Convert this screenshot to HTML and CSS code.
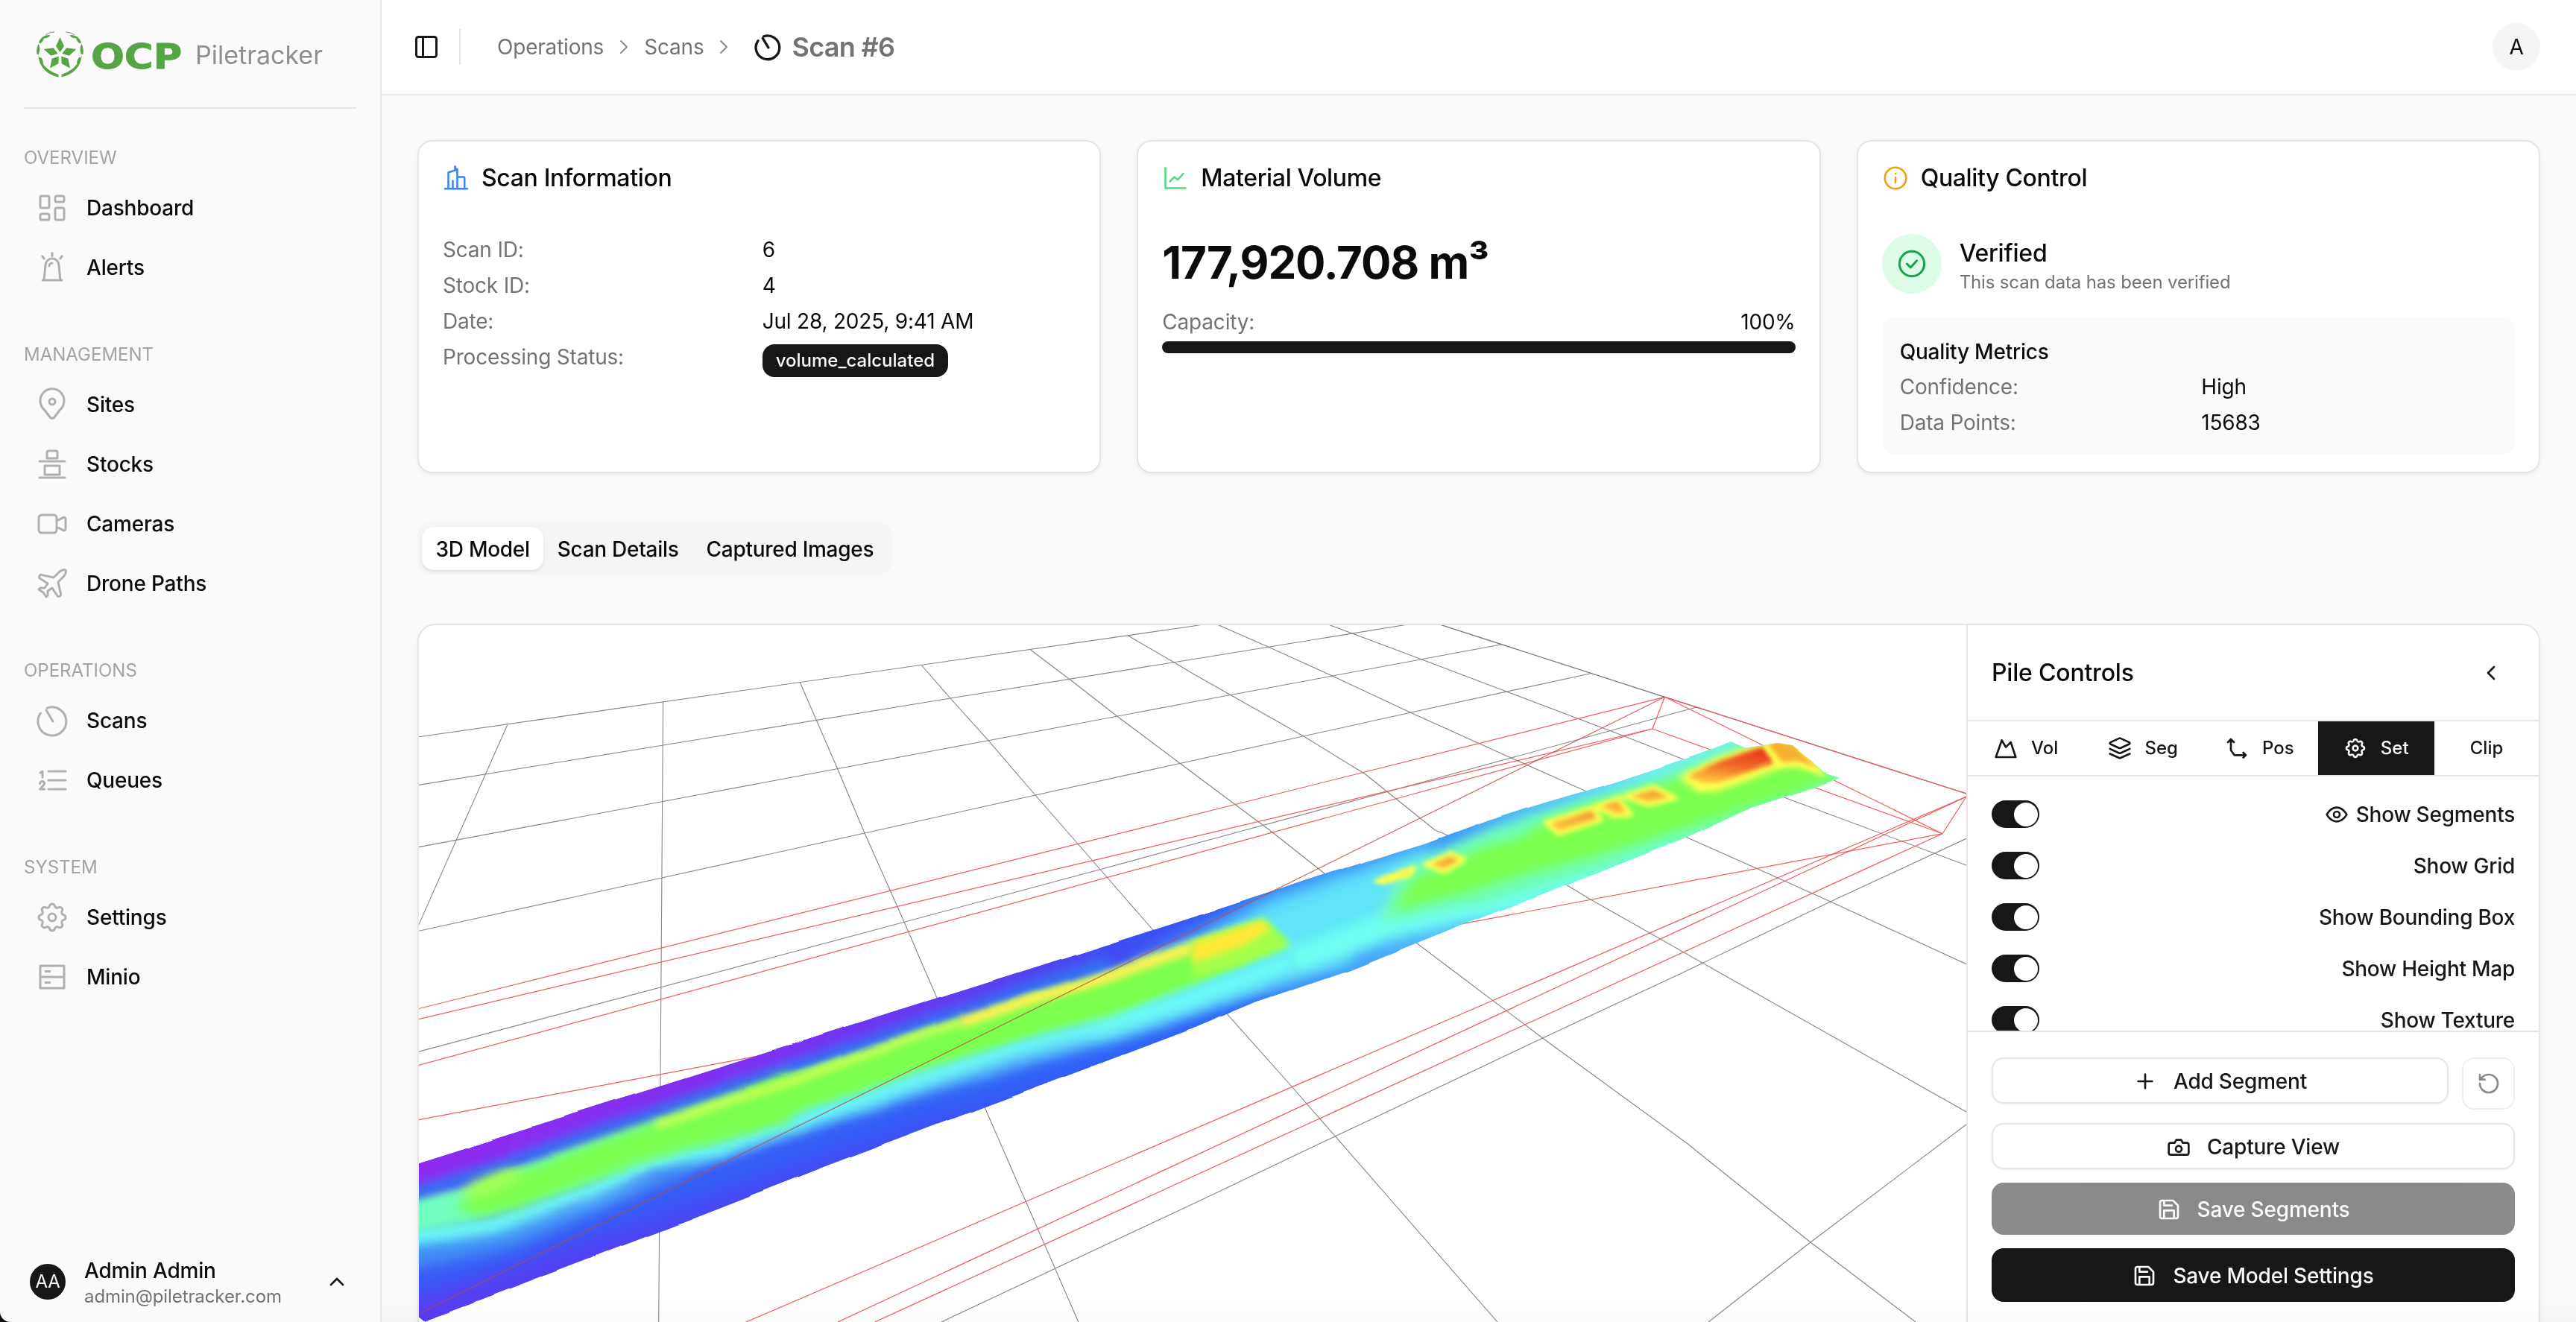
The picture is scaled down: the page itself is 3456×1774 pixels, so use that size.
FILE: index.html
```html
<!DOCTYPE html>
<html lang="en">
<head>
<meta charset="utf-8">
<title>Scan #6 - OCP Piletracker</title>
<link rel="stylesheet" href="styles.css">
</head>
<body>
<svg class="defs" aria-hidden="true">
  <symbol id="i-dashboard" viewBox="0 0 24 24"><path d="M5 4h4a1 1 0 0 1 1 1v6a1 1 0 0 1-1 1H5a1 1 0 0 1-1-1V5a1 1 0 0 1 1-1M5 16h4a1 1 0 0 1 1 1v2a1 1 0 0 1-1 1H5a1 1 0 0 1-1-1v-2a1 1 0 0 1 1-1M15 12h4a1 1 0 0 1 1 1v6a1 1 0 0 1-1 1h-4a1 1 0 0 1-1-1v-6a1 1 0 0 1 1-1M15 4h4a1 1 0 0 1 1 1v2a1 1 0 0 1-1 1h-4a1 1 0 0 1-1-1V5a1 1 0 0 1 1-1"/></symbol>
  <symbol id="i-alert" viewBox="0 0 24 24"><path d="M5.500 20.500h13M6.500 20.500 7.500 10.500a4.500 4.500 0 0 1 9 0L17.500 20.500M10 11a2 2 0 0 1 2-2M12 2.200v2M5.400 4.400l1.200 1.600M18.600 4.400l-1.200 1.600"/></symbol>
  <symbol id="i-pin" viewBox="0 0 24 24"><path d="M10 10.500a2 2 0 1 0 4 0a2 2 0 0 0-4 0M17.200 16l-3.800 5a1.800 1.800 0 0 1-2.800 0L6.800 16a8 8 0 1 1 10.400 0z" transform="translate(0 -.5)"/></symbol>
  <symbol id="i-stock" viewBox="0 0 24 24"><path d="M9.500 3h5a1 1 0 0 1 1 1v4h-7V4a1 1 0 0 1 1-1zM3.500 10h17M7 13h10v6H7zM3.500 21h17"/></symbol>
  <symbol id="i-video" viewBox="0 0 24 24"><path d="M15 10l4.553-2.276A1 1 0 0 1 21 8.618v6.764a1 1 0 0 1-1.447.894L15 14v-4zM3 8a2 2 0 0 1 2-2h8a2 2 0 0 1 2 2v8a2 2 0 0 1-2 2H5a2 2 0 0 1-2-2z"/></symbol>
  <symbol id="i-plane" viewBox="0 0 24 24"><path d="M17.800 19.200 16 11l3.500-3.500C21 6 21.500 4 21 3c-1-.5-3 0-4.500 1.500L13 8 4.800 6.200c-.5-.1-.9.1-1.100.5l-.3.5c-.2.5-.1 1 .3 1.300L9 12l-2 3H4l-1 1 3 2 2 3 1-1v-3l3-2 3.500 5.300c.3.4.8.5 1.300.3l.5-.2c.4-.3.6-.7.5-1.200z"/></symbol>
  <symbol id="i-scan" viewBox="0 0 24 24"><path d="M12.500 12.500 8 5M8.600 3.600A9.500 9.500 0 1 1 4.200 7"/></symbol>
  <symbol id="i-queue" viewBox="0 0 24 24"><path d="M9.500 6h11.500M9.500 12h11.500M9.500 18h11.500M5.500 10V6L4 7M3.800 14.200a1.500 1.500 0 0 1 3 0c0 .6-.5 1-1 1.500L3.800 18h3"/></symbol>
  <symbol id="i-gear" viewBox="0 0 24 24"><path d="M10.325 4.317c.426-1.756 2.924-1.756 3.350 0a1.724 1.724 0 0 0 2.573 1.066c1.543-.94 3.310.826 2.370 2.370a1.724 1.724 0 0 0 1.065 2.572c1.756.426 1.756 2.924 0 3.350a1.724 1.724 0 0 0-1.066 2.573c.94 1.543-.826 3.310-2.370 2.370a1.724 1.724 0 0 0-2.572 1.065c-.426 1.756-2.924 1.756-3.350 0a1.724 1.724 0 0 0-2.573-1.066c-1.543.94-3.310-.826-2.370-2.370a1.724 1.724 0 0 0-1.065-2.572c-1.756-.426-1.756-2.924 0-3.350a1.724 1.724 0 0 0 1.066-2.573c-.94-1.543.826-3.310 2.370-2.370c1 .608 2.296.07 2.572-1.065z"/><path d="M9.500 12a2.500 2.500 0 1 0 5 0a2.500 2.500 0 0 0-5 0"/></symbol>
  <symbol id="i-server" viewBox="0 0 24 24"><path d="M4 4.500h16v15H4zM4 12h16M7.500 8.200h3M7.500 15.800h3"/></symbol>
  <symbol id="i-panel" viewBox="0 0 24 24"><rect x="3" y="3" width="18" height="18" rx="2"/><path d="M9 3v18"/></symbol>
  <symbol id="i-right" viewBox="0 0 24 24"><path d="M9 6l6 6-6 6"/></symbol>
  <symbol id="i-left" viewBox="0 0 24 24"><path d="M15 6l-6 6 6 6"/></symbol>
  <symbol id="i-up" viewBox="0 0 24 24"><path d="M6 15l6-6 6 6"/></symbol>
  <symbol id="i-building" viewBox="0 0 24 24"><path d="M2 21.500h20M5 21.500V7l6-2V1.500l1 3.500 1-1v17.500M13 11h5.500a1 1 0 0 1 1 1v9.500M9 21.500v-7"/></symbol>
  <symbol id="i-chart" viewBox="0 0 24 24"><path d="M3 3v18h18M19 8l-5 5.500-3-2.500-4 4"/></symbol>
  <symbol id="i-info" viewBox="0 0 24 24"><circle cx="12" cy="12" r="9.500"/><path d="M12 16v-4.500M12 8h.01"/></symbol>
  <symbol id="i-check" viewBox="0 0 24 24"><circle cx="12" cy="12" r="10"/><path d="M8 12l3 3 5-5.500"/></symbol>
  <symbol id="i-mountain" viewBox="0 0 24 24"><path d="M8 4l4 7 5-5 5 15H2z"/></symbol>
  <symbol id="i-layers" viewBox="0 0 24 24"><path d="M12.830 2.180a2 2 0 0 0-1.660 0L2.600 6.080a1 1 0 0 0 0 1.830l8.580 3.910a2 2 0 0 0 1.660 0l8.580-3.900a1 1 0 0 0 0-1.830zM22 17.650l-9.170 4.160a2 2 0 0 1-1.660 0L2 17.650M22 12.650l-9.170 4.160a2 2 0 0 1-1.660 0L2 12.650"/></symbol>
  <symbol id="i-axis" viewBox="0 0 24 24"><path d="M3 6l3-3 3 3M6 3v11l3.500 5H21M18.500 16.500 21 19l-2.500 2.500"/></symbol>
  <symbol id="i-eye" viewBox="0 0 24 24"><path d="M2 12s3.500-7 10-7 10 7 10 7-3.500 7-10 7-10-7-10-7z"/><circle cx="12" cy="12" r="3"/></symbol>
  <symbol id="i-plus" viewBox="0 0 24 24"><path d="M5 12h14M12 5v14"/></symbol>
  <symbol id="i-undo" viewBox="0 0 24 24"><path d="M3 12a9 9 0 1 0 9-9 9.750 9.750 0 0 0-6.740 2.740L3 8M3 3v5h5"/></symbol>
  <symbol id="i-camera" viewBox="0 0 24 24"><path d="M14.500 5h-5L8 8H4a2 2 0 0 0-2 2v8a2 2 0 0 0 2 2h16a2 2 0 0 0 2-2v-8a2 2 0 0 0-2-2h-4z"/><circle cx="12" cy="14" r="3"/></symbol>
  <symbol id="i-save" viewBox="0 0 24 24"><path d="M19 21H5a2 2 0 0 1-2-2V5a2 2 0 0 1 2-2h11l5 5v11a2 2 0 0 1-2 2zM17 21v-8H7v8M7 3v5h8"/></symbol>
</svg>

<div class="app">
  <aside class="sidebar">
    <div class="brand">
      <svg class="emblem" viewBox="0 0 64 62" aria-hidden="true">
        <g fill="#55a545">
          <path d="M32 28 26.500 20 32 8 37.500 20z"/>
          <path d="M32 28 26.500 20 32 8 37.500 20z" transform="rotate(72 32 31)"/>
          <path d="M32 28 26.500 20 32 8 37.500 20z" transform="rotate(144 32 31)"/>
          <path d="M32 28 26.500 20 32 8 37.500 20z" transform="rotate(216 32 31)"/>
          <path d="M32 28 26.500 20 32 8 37.500 20z" transform="rotate(288 32 31)"/>
          <path d="M30 61.500C14 58 3.500 47 3 32 7 46 18 54 30 58zM34 61.500C50 58 60.500 47 61 32 57 46 46 54 34 58z"/>
          <path d="M1 31c-1-5 0-10 2-14 2.500 4 2.500 10 0 14zM3.500 15c1-3 3-6 6.500-8.500 1 3.500-1 8-5 10zM10 7c3-1.500 6-2.500 9-1.500-2 2.500-6 4.500-9 3.500zM63 31c1-5 0-10-2-14-2.500 4-2.500 10 0 14zM60.500 15c-1-3-3-6-6.500-8.500-1 3.500 1 8 5 10zM54 7c-3-1.500-6-2.500-9-1.500 2 2.500 6 4.500 9 3.500z"/>
          <path d="M4 36c1 3 2.500 6 5 8.500 1-3 0-7-3-10zM60 36c-1 3-2.500 6-5 8.500-1-3 0-7 3-10z"/>
        </g>
        <path class="emblem-line" d="M13 4.500c3-2 7-3.500 11-3.500M51 4.500c-3-2-7-3.500-11-3.500"/>
      </svg>
      <svg class="ocp" viewBox="0 0 122 36" role="img" aria-label="OCP"><text x="0" y="35" textLength="122" lengthAdjust="spacingAndGlyphs">OCP</text></svg>
      <span class="brand-name">Piletracker</span>
    </div>
    <nav class="nav">
      <section class="nav-group">
        <h2 class="nav-label">OVERVIEW</h2>
        <a class="nav-item"><svg class="ic-nav"><use href="#i-dashboard"/></svg>Dashboard</a>
        <a class="nav-item"><svg class="ic-nav"><use href="#i-alert"/></svg>Alerts</a>
      </section>
      <section class="nav-group">
        <h2 class="nav-label">MANAGEMENT</h2>
        <a class="nav-item"><svg class="ic-nav"><use href="#i-pin"/></svg>Sites</a>
        <a class="nav-item"><svg class="ic-nav"><use href="#i-stock"/></svg>Stocks</a>
        <a class="nav-item"><svg class="ic-nav"><use href="#i-video"/></svg>Cameras</a>
        <a class="nav-item"><svg class="ic-nav"><use href="#i-plane"/></svg>Drone Paths</a>
      </section>
      <section class="nav-group">
        <h2 class="nav-label">OPERATIONS</h2>
        <a class="nav-item"><svg class="ic-nav"><use href="#i-scan"/></svg>Scans</a>
        <a class="nav-item"><svg class="ic-nav"><use href="#i-queue"/></svg>Queues</a>
      </section>
      <section class="nav-group">
        <h2 class="nav-label">SYSTEM</h2>
        <a class="nav-item"><svg class="ic-nav"><use href="#i-gear"/></svg>Settings</a>
        <a class="nav-item"><svg class="ic-nav"><use href="#i-server"/></svg>Minio</a>
      </section>
    </nav>
    <div class="user">
      <span class="user-avatar">AA</span>
      <div class="user-text">
        <div class="user-name">Admin Admin</div>
        <div class="user-mail">admin@piletracker.com</div>
      </div>
      <svg class="ic-chev-up"><use href="#i-up"/></svg>
    </div>
  </aside>

  <main class="main">
    <header class="topbar">
      <svg class="ic-panel"><use href="#i-panel"/></svg>
      <span class="topbar-sep"></span>
      <span class="crumb">Operations</span>
      <svg class="ic-crumb"><use href="#i-right"/></svg>
      <span class="crumb">Scans</span>
      <svg class="ic-crumb"><use href="#i-right"/></svg>
      <svg class="ic-scan"><use href="#i-scan"/></svg>
      <span class="crumb-current">Scan #6</span>
      <span class="top-avatar">A</span>
    </header>

    <div class="content">
      <div class="cards">
        <article class="card">
          <h3 class="card-title"><svg class="ic-title blue"><use href="#i-building"/></svg>Scan Information</h3>
          <dl class="rows rows-info">
            <dt>Scan ID:</dt><dd>6</dd>
            <dt>Stock ID:</dt><dd>4</dd>
            <dt>Date:</dt><dd>Jul 28, 2025, 9:41 AM</dd>
            <dt>Processing Status:</dt><dd><span class="badge">volume_calculated</span></dd>
          </dl>
        </article>
        <article class="card">
          <h3 class="card-title"><svg class="ic-title green"><use href="#i-chart"/></svg>Material Volume</h3>
          <div class="volume">177,920.708 m³</div>
          <div class="capacity"><span class="muted">Capacity:</span><span>100%</span></div>
          <div class="bar"></div>
        </article>
        <article class="card">
          <h3 class="card-title"><svg class="ic-title orange"><use href="#i-info"/></svg>Quality Control</h3>
          <div class="status">
            <span class="status-dot"><svg class="ic-status"><use href="#i-check"/></svg></span>
            <div class="status-text">
              <div class="status-title">Verified</div>
              <div class="status-sub">This scan data has been verified</div>
            </div>
          </div>
          <div class="metrics">
            <div class="metrics-title">Quality Metrics</div>
            <dl class="rows rows-metrics">
              <dt>Confidence:</dt><dd>High</dd>
              <dt>Data Points:</dt><dd>15683</dd>
            </dl>
          </div>
        </article>
      </div>

      <div class="tabs">
        <span class="tab tab-active">3D Model</span>
        <span class="tab">Scan Details</span>
        <span class="tab">Captured Images</span>
      </div>

      <section class="viewer">
        <div class="canvas">
          <svg class="scene" viewBox="562 839 2076 935" aria-hidden="true">
            <defs>
              <clipPath id="rib"><path d="M560 1560.700 1362.600 1307 1488.600 1267 1600 1231.300 1699.500 1198.700 1775.800 1173.700 1911.800 1132 1998 1100 2077.600 1075 2150.500 1053.700 2296.500 1005.300 2323 995.300 2343 1003.700 2369.400 999.700 2386 997 2406 1000.300 2429 1018.700 2452 1038.700 2469 1043.700 2442.400 1053.700 2349.500 1083.700 2263 1123.700 2104 1187 1968 1238.700 1812 1302 1686 1344 1600 1380 1475 1427.300 1319.500 1485.700 1104 1567.300 881.700 1654 570 1772.300 560 1764z"/></clipPath>
              <linearGradient id="lowerGrad" gradientUnits="userSpaceOnUse" x1="560" y1="0" x2="2460" y2="0">
                <stop offset="0" stop-color="#5a3cf2"/><stop offset=".35" stop-color="#3f4ef5"/><stop offset=".49" stop-color="#3260f8"/><stop offset=".584" stop-color="#3470fa"/><stop offset=".65" stop-color="#4098f8"/><stop offset=".757" stop-color="#5cc8fa"/><stop offset=".896" stop-color="#70f8e0"/><stop offset="1" stop-color="#7cffa8"/>
              </linearGradient>
              <linearGradient id="upperGrad" gradientUnits="userSpaceOnUse" x1="560" y1="0" x2="2460" y2="0">
                <stop offset="0" stop-color="#8f2bf0"/><stop offset=".25" stop-color="#7c30f2"/><stop offset=".42" stop-color="#5a3ff0"/><stop offset=".5" stop-color="#3e4cf2"/><stop offset=".6" stop-color="#2d60f5"/><stop offset=".7" stop-color="#3a88f5"/><stop offset=".78" stop-color="#50b8fa"/><stop offset=".88" stop-color="#70f0f0"/><stop offset="1" stop-color="#70ffb8"/>
              </linearGradient>
              <linearGradient id="softGrad" gradientUnits="userSpaceOnUse" x1="560" y1="0" x2="1800" y2="0">
                <stop offset="0" stop-color="#3f8cf5"/><stop offset=".6" stop-color="#4ea8f8"/><stop offset="1" stop-color="#58c8fa"/>
              </linearGradient>
              <linearGradient id="orangeB" gradientUnits="objectBoundingBox" x1=".6" y1="0" x2=".4" y2="1"><stop offset="0" stop-color="#f08c30"/><stop offset="1" stop-color="#ffd040"/></linearGradient>
              <linearGradient id="redGrad" gradientUnits="objectBoundingBox" x1=".7" y1="0" x2=".4" y2="1"><stop offset="0" stop-color="#e8301c"/><stop offset=".55" stop-color="#f06a28"/><stop offset="1" stop-color="#ffc83c"/></linearGradient>
              <filter id="b3" filterUnits="userSpaceOnUse" x="500" y="900" width="2100" height="950"><feGaussianBlur stdDeviation="3"/></filter>
              <filter id="b5" filterUnits="userSpaceOnUse" x="500" y="900" width="2100" height="950"><feGaussianBlur stdDeviation="5"/></filter>
              <filter id="b8" filterUnits="userSpaceOnUse" x="500" y="900" width="2100" height="950"><feGaussianBlur stdDeviation="8"/></filter>
              <filter id="b14" filterUnits="userSpaceOnUse" x="500" y="900" width="2100" height="950"><feGaussianBlur stdDeviation="14"/></filter>
              <filter id="wobble" filterUnits="userSpaceOnUse" x="500" y="900" width="2100" height="950" color-interpolation-filters="sRGB">
                <feTurbulence type="fractalNoise" baseFrequency=".007 .012" numOctaves="2" seed="7"/>
                <feDisplacementMap in="SourceGraphic" scale="7" xChannelSelector="R" yChannelSelector="G"/>
              </filter>
            </defs>

            <g class="grid-lines">
              <polyline points="560,989 1600,840.300 1620,837"/>
              <polyline points="560,1053.700 888,1000.300 1275,937 1575,888.700 1600,884.700 1888.500,838"/>
              <polyline points="560,1137 888,1075.700 1326,993.700 1600,942 2014.600,864.700"/>
              <polyline points="560,1249.700 888,1178 1160,1118 1389,1067 1600,1020.700 1892,956.300 2134,903.700"/>
              <polyline points="560,1411.700 964.600,1304 1475,1167 1600,1133 1875,1058.700 2276.600,948.700"/>
              <polyline points="680.700,972.700 560,1245"/>
              <polyline points="889.600,942 887,1304 883.700,1774"/>
              <polyline points="1073.400,916 1123.800,1032 1160,1118 1213,1237 1243,1307 1446.800,1774"/>
              <polyline points="1236.600,893 1275,937 1326,993.700 1389,1067 1485,1177 1546,1247 1647.800,1362.300 1733,1458 2009,1774"/>
              <polyline points="1382.500,872 1435.600,912 1498.600,961 1584,1025 1600,1037 1656,1078.700 1706,1116 1779,1173.700 1951.500,1304 2069.600,1393 2263,1534 2429,1667 2570,1774"/>
              <polyline points="1513,852.700 1575,888.700 1600,903.700 1749,988 1832,1039 1925,1113.700 2100.800,1187 2134,1207 2305,1304 2638,1492"/>
              <polyline points="1633,838 1703,868.700 1789,907.700 1892,956 2031,1018.700 2124,1060 2263,1123.700 2356,1165 2456,1210 2638,1293.700"/>
              <polyline points="1782,838 1907,884.700 2021,928 2164,982 2296,1033.700 2399,1072 2595,1145 2638,1161"/>
              <polyline class="grid-dark" points="1931.600,838 2233.400,935.300 2638,1065"/>
              <polyline points="1263,1774 1600,1615.700 1791,1525 2069.600,1393 2260,1304 2455.600,1210 2638,1125.300"/>
              <polyline points="2292,1774 2429,1667 2638,1509"/>
            </g>

            <g class="red-lines">
              <polyline points="560,1354 2233.400,935.300"/>
              <polyline points="560,1368 2217,978"/>
              <polyline points="560,1430 2217,978"/>
              <polyline points="2217,978 2233.400,935.300 2638,1065"/>
              <polyline points="2233.400,935.300 2606,1118.700"/>
              <polyline points="2217,978 2606,1118.700"/>
              <polyline points="2606,1118.700 2638,1069"/>
              <polyline points="2606,1118.700 560,1503"/>
              <polyline points="1001,1774 2638,1069"/>
              <polyline points="1124,1774 2638,1069"/>
              <polyline points="1173.600,1774 2606,1118.700"/>
            </g>

            <g filter="url(#wobble)">
            <g class="pile" clip-path="url(#rib)">
              <rect x="540" y="980" width="1960" height="810" fill="url(#lowerGrad)"/>
              <polygon filter="url(#b5)" fill="url(#upperGrad)" points="530,1540 1369,1270 1600,1200 2000,1070 2300,975 2490,980 2490,990 2400,1002 2263,1035 1998,1114 1733,1222 1488,1304 1223,1394 560,1612 530,1622"/>
              <polyline filter="url(#b8)" class="band" stroke="#2f74f5" stroke-width="22" points="545,1608 1000,1457 1223,1384 1488,1294"/>
              <polyline filter="url(#b14)" class="band" stroke="#2f62f7" stroke-width="34" points="540,1728 1223,1488 1488,1408 1700,1335"/>
              <polygon filter="url(#b8)" fill="url(#softGrad)" points="530,1655 759,1620 958,1540 1223,1440 1488,1372 1700,1295 1800,1260 1820,1290 1700,1332 1488,1400 1223,1476 958,1560 700,1670 530,1712"/>
              <ellipse filter="url(#b8)" cx="900" cy="1566" rx="26" ry="14" transform="rotate(-30 900 1566)" fill="#3a78f2"/>
              <polygon filter="url(#b14)" fill="#5fe4fa" points="1470,1330 1700,1205 1925,1130 1940,1235 1700,1312 1470,1392"/>
              <polyline filter="url(#b8)" class="band" stroke="#6cfbf6" stroke-width="26" points="545,1660 659,1642 792,1597 872,1558 958,1540 1157,1473 1356,1407 1488,1374 1600,1340 1733,1288"/>
              <polyline filter="url(#b8)" class="band" stroke="#70fff0" stroke-width="34" points="1733,1288 1865,1240 2031,1206 2197,1156 2330,1112 2450,1062"/>
              <polygon filter="url(#b5)" fill="#70ffc0" points="545,1614 626,1592 679,1571 878,1504 991,1467 1190,1401 1389,1334 1488,1304 1693,1232 1735,1268 1600,1325 1488,1368 1356,1402 1157,1467 971,1531 858,1564 759,1601 626,1640 545,1656"/>
              <polygon filter="url(#b8)" fill="#7dff4e" points="640,1596 700,1570 878,1506 1000,1466 1060,1440 1060,1505 971,1528 858,1558 759,1596 690,1622 640,1630 610,1622"/>
              <polygon filter="url(#b5)" fill="#7dff4e" points="1000,1462 1190,1403 1389,1336 1488,1306 1600,1266 1693,1236 1726,1264 1660,1294 1600,1320 1488,1360 1356,1396 1157,1460 1000,1515"/>
              <polygon filter="url(#b8)" fill="#70ffb8" points="1850,1240 1878,1168 2000,1112 2263,1030 2400,990 2480,1040 2300,1120 2140,1170 2000,1210"/>
              <polygon filter="url(#b8)" fill="#7dff4e" points="1872,1224 1896,1178 1998,1134 2031,1128 2077.600,1101 2263,1038 2363,1002 2400,1006 2469,1044 2442,1052 2396,1068 2290,1102 2131,1152 1998,1188"/>
              <polyline filter="url(#b5)" class="band" stroke="#c4ff50" stroke-width="11" points="880,1510 991,1474 1064,1450.700 1177,1409 1289.600,1370.700"/>
              <polyline filter="url(#b5)" class="band" stroke="#fff050" stroke-width="14" points="1289.600,1370.700 1409,1334 1488.600,1309 1600,1270"/>
              <ellipse filter="url(#b8)" cx="660" cy="1587" rx="44" ry="11" transform="rotate(-22 660 1587)" fill="#a8ff4c"/>
              <polygon filter="url(#b5)" fill="#a4ff48" points="1600,1262 1693,1234 1708,1246 1730,1268 1662,1294 1600,1312"/>
              <polygon filter="url(#b5)" fill="#ffe838" points="1600,1264 1693,1235 1703,1247 1666,1268 1600,1290"/>
              <polygon filter="url(#b5)" fill="#ffff50" points="2252,1040 2310,1014 2368,996 2392,1028 2303,1062 2278,1062"/>
              <polygon filter="url(#b3)" fill="url(#redGrad)" points="2264,1040 2310,1020 2366,1002 2383,1022 2303,1050 2283,1050"/>
              <polygon fill="#ffff50" filter="url(#b3)" points="2366,998 2386,993 2412,998 2432,1018 2452,1042 2410,1028 2386,1030"/>
              <polygon fill="#f5b030" filter="url(#b3)" points="2372,998 2386,993 2409,1000 2427,1018 2440,1030 2412,1020 2392,1022"/>
              <g filter="url(#b3)" class="patch">
                <polygon points="2074,1103.700 2137,1083.700 2147,1100 2091,1118.700"/>
                <polygon points="2140.600,1082 2170,1070 2187,1092 2164,1093.700"/>
                <polygon points="2177,1067 2217,1054 2247,1070 2210,1078.700"/>
                <polygon points="1912,1158.700 1945,1145 1965,1153.700 1938,1168.700"/>
                <polygon points="1845,1183.700 1898.500,1163 1892,1173.700 1855.400,1186"/>
              </g>
            </g>
            </g>
            <line class="red-over" x1="2233.400" y1="935.300" x2="560" y2="1764"/>
          </svg>
        </div>

        <aside class="panel">
          <div class="panel-head">
            <h3 class="panel-title">Pile Controls</h3>
            <svg class="ic-back"><use href="#i-left"/></svg>
          </div>
          <div class="ptabs">
            <span class="ptab"><svg class="ic-btn"><use href="#i-mountain"/></svg>Vol</span>
            <span class="ptab"><svg class="ic-btn"><use href="#i-layers"/></svg>Seg</span>
            <span class="ptab"><svg class="ic-btn"><use href="#i-axis"/></svg>Pos</span>
            <span class="ptab ptab-active"><svg class="ic-btn"><use href="#i-gear"/></svg>Set</span>
            <span class="ptab ptab-last">Clip</span>
          </div>
          <div class="toggles">
            <div class="toggle-row"><span class="switch"><i class="thumb"></i></span><span class="toggle-label"><svg class="ic-btn"><use href="#i-eye"/></svg>Show Segments</span></div>
            <div class="toggle-row"><span class="switch"><i class="thumb"></i></span><span class="toggle-label">Show Grid</span></div>
            <div class="toggle-row"><span class="switch"><i class="thumb"></i></span><span class="toggle-label">Show Bounding Box</span></div>
            <div class="toggle-row"><span class="switch"><i class="thumb"></i></span><span class="toggle-label">Show Height Map</span></div>
            <div class="toggle-row"><span class="switch"><i class="thumb"></i></span><span class="toggle-label">Show Texture</span></div>
          </div>
          <div class="actions">
            <div class="action-row">
              <button class="btn btn-outline btn-grow"><svg class="ic-btn"><use href="#i-plus"/></svg>Add Segment</button>
              <button class="btn-reset"><svg class="ic-btn"><use href="#i-undo"/></svg></button>
            </div>
            <button class="btn btn-outline"><svg class="ic-btn"><use href="#i-camera"/></svg>Capture View</button>
            <button class="btn btn-solid btn-disabled"><svg class="ic-btn"><use href="#i-save"/></svg>Save Segments</button>
            <button class="btn btn-solid btn-tall"><svg class="ic-btn"><use href="#i-save"/></svg>Save Model Settings</button>
          </div>
        </aside>
      </section>
    </div>
  </main>
</div>
</body>
</html>
```

FILE: styles.css
```css
* { box-sizing: border-box; }
html, body { margin: 0; height: 100%; }
body {
  overflow: hidden;
  background: #fafafa;
  color: #0a0a0a;
  font-family: Inter, "Liberation Sans", sans-serif;
  font-size: 28px;
  line-height: 40px;
  letter-spacing: -.2px;
}
.defs { position: absolute; width: 0; height: 0; }
svg { display: block; fill: none; stroke: currentColor; stroke-linecap: round; stroke-linejoin: round; flex: none; }
h2, h3, dl, dd { margin: 0; }

.app { display: flex; height: 1774px; background: #111; }

/* Sidebar */
.sidebar {
  width: 512px;
  flex: none;
  display: flex;
  flex-direction: column;
  padding: 0 32px;
  background: #fafafa;
  border-right: 2px solid #e5e5e5;
  border-bottom-left-radius: 14px;
}
.brand {
  height: 146px;
  display: flex;
  align-items: flex-start;
  padding: 42px 0 0 16px;
  border-bottom: 2px solid #e5e5e5;
}
.emblem { width: 65px; height: 62px; stroke: none; }
.emblem-line { stroke: #55a545; stroke-width: 1; fill: none; }
.ocp { width: 122px; height: 36px; margin: 15px 0 0 9px; stroke: #55a545; stroke-width: .8; fill: #55a545; }
.ocp text { font-family: "DejaVu Sans", sans-serif; font-weight: 700; font-size: 47px; }
.brand-name { margin: 12px 0 0 18px; font-size: 34px; line-height: 40px; color: #8f8f8f; letter-spacing: 0; }

.nav { display: flex; flex-direction: column; gap: 59px; padding-top: 44px; }
.nav-group { display: flex; flex-direction: column; gap: 8px; }
.nav-label { height: 40px; margin-bottom: 5px; font-size: 24px; line-height: 44px; font-weight: 400; color: #a3a3a3; letter-spacing: 0; }
.nav-item { height: 72px; display: flex; align-items: center; gap: 22px; padding-left: 14px; font-weight: 500; color: #0a0a0a; }
.ic-nav { width: 48px; height: 48px; color: #b0b0b0; stroke-width: 1.5; }

.user { margin-top: auto; display: flex; align-items: center; height: 64px; margin-bottom: 22px; padding: 0 10px 0 8px; }
.user-avatar { width: 48px; height: 48px; flex: none; border-radius: 50%; background: #171717; color: #fafafa; font-size: 24px; line-height: 48px; text-align: center; }
.user-text { margin-left: 25px; padding-top: 4px; }
.user-name { font-weight: 500; line-height: 36px; }
.user-mail { font-size: 24px; line-height: 34px; color: #737373; letter-spacing: -.1px; }
.ic-chev-up { width: 32px; height: 32px; margin-left: auto; stroke-width: 2; color: #171717; }

/* Main */
.main { flex: 1; min-width: 0; background: #fafafa; display: flex; flex-direction: column; }
.topbar {
  height: 128px;
  flex: none;
  display: flex;
  align-items: center;
  padding: 0 48px 0 42px;
  background: #fff;
  border-bottom: 2px solid #e5e5e5;
}
.ic-panel { width: 36px; height: 36px; stroke-width: 2; color: #171717; }
.topbar-sep { width: 2px; height: 48px; margin: 0 49px 0 26px; background: #e5e5e5; }
.crumb { color: #737373; }
.ic-crumb { width: 32px; height: 32px; margin: 0 11px; color: #8a8a8a; stroke-width: 1.5; }
.ic-scan { width: 40px; height: 40px; margin-left: 12px; stroke-width: 2; color: #171717; }
.crumb-current { margin-left: 12px; font-size: 36px; font-weight: 600; color: #737373; letter-spacing: -.7px; }
.top-avatar { margin-left: auto; width: 64px; height: 64px; border-radius: 50%; background: #f5f5f5; text-align: center; line-height: 64px; font-size: 28px; }

.content { position: relative; flex: 1; padding: 60px 48px 0; overflow: hidden; }
.content::after {
  content: "";
  position: absolute;
  left: 0; right: 0; bottom: 0;
  height: 36px;
  background: linear-gradient(#fff, #fafafa);
  mix-blend-mode: multiply;
  pointer-events: none;
}

/* Cards */
.cards { display: grid; grid-template-columns: repeat(3, 1fr); gap: 48px; }
.card {
  height: 447px;
  padding: 32px;
  background: #fff;
  border: 2px solid #e5e5e5;
  border-radius: 20px;
  box-shadow: 0 2px 6px rgba(0,0,0,.06);
}
.card-title { display: flex; align-items: center; gap: 16px; height: 34px; font-size: 32px; line-height: 34px; font-weight: 500; letter-spacing: -.35px; }
.ic-title { width: 36px; height: 36px; stroke-width: 1.7; }
.blue { color: #3b82f6; }
.green { color: #4ade80; }
.orange { color: #f59e0b; }

.rows { display: grid; grid-template-columns: 1fr 1fr; column-gap: 8px; row-gap: 8px; }
.rows dt { color: #737373; }
.rows-info { margin-top: 59px; }
.badge { display: inline-block; height: 44px; margin-top: 3px; padding: 0 18px; border-radius: 16px; background: #171717; color: #fafafa; font-size: 24px; line-height: 44px; font-weight: 500; letter-spacing: 0; }

.volume { margin-top: 58px; font-size: 60px; line-height: 76px; font-weight: 700; letter-spacing: -1.1px; }
.capacity { display: flex; justify-content: space-between; margin-top: 22px; }
.muted { color: #737373; }
.bar { height: 16px; margin-top: 6px; border-radius: 8px; background: #171717; }

.status { display: flex; align-items: flex-start; gap: 24px; margin-top: 58px; }
.status-dot { width: 80px; height: 80px; flex: none; display: flex; align-items: center; justify-content: center; border-radius: 50%; background: #dcfce7; }
.ic-status { width: 40px; height: 40px; stroke-width: 1.800; color: #16a34a; }
.status-text { padding-top: 6px; }
.status-title { font-size: 32px; line-height: 40px; font-weight: 500; }
.status-sub { height: 34px; font-size: 24px; line-height: 38px; color: #737373; letter-spacing: -.15px; }
.metrics { height: 184px; margin-top: 32px; padding: 26px 24px 0; border-radius: 16px; background: #fafafa; }
.metrics-title { font-weight: 500; margin-bottom: 7px; }

/* Tabs */
.tabs { display: inline-flex; height: 72px; margin-top: 65px; padding: 7px 6px; border-radius: 20px; background: #f5f5f5; vertical-align: top; letter-spacing: -.28px; }
.tab { padding: 1px 18.500px 0; font-weight: 500; line-height: 58px; border-radius: 16px; }
.tab-active { background: #fff; box-shadow: 0 2px 4px rgba(0,0,0,.1); }

/* Viewer */
.viewer {
  display: flex;
  height: 1000px;
  margin-top: 65px;
  overflow: hidden;
  background: #fff;
  border: 2px solid #e5e5e5;
  border-radius: 24px;
  box-shadow: 0 2px 6px rgba(0,0,0,.06);
}
.canvas { width: 2076px; flex: none; overflow: hidden; }
.scene { width: 2076px; height: 935px; stroke-linecap: butt; }
.grid-lines polyline { fill: none; stroke: #858585; stroke-width: 1.100; }
.grid-lines .grid-dark { stroke: #777; stroke-width: 1.300; }
.red-lines polyline { fill: none; stroke: #ef5b5b; stroke-width: 1.200; }
.red-over { stroke: #c0483c; stroke-width: 1.100; stroke-opacity: .85; }
.pile { stroke: none; }
.band { fill: none; stroke-linecap: butt; }
.patch polygon { fill: url(#orangeB); stroke: #ffff50; stroke-width: 6; }

/* Panel */
.panel { width: 768px; flex: none; display: flex; flex-direction: column; background: #fff; border-left: 2px solid #e5e5e5; }
.panel-head { height: 127px; flex: none; display: flex; align-items: center; justify-content: space-between; padding: 0 48px 0 32px; }
.panel-title { font-size: 32px; line-height: 40px; font-weight: 500; letter-spacing: -.2px; }
.ic-back { width: 32px; height: 32px; stroke-width: 2; color: #171717; }
.ptabs { height: 76px; flex: none; display: flex; border-top: 2px solid #e5e5e5; border-bottom: 2px solid #e5e5e5; }
.ptab { width: 156.500px; display: flex; align-items: center; justify-content: center; gap: 18px; font-size: 24px; font-weight: 500; color: #171717; letter-spacing: 0; }
.ptab-active { background: #171717; color: #fafafa; }
.ptab-last { width: auto; flex: 1; }
.ic-btn { width: 32px; height: 32px; stroke-width: 2; }
.toggles { height: 341px; flex: none; overflow: hidden; display: flex; flex-direction: column; gap: 32px; padding: 32px 32px 0; }
.toggle-row { height: 37px; flex: none; display: flex; align-items: center; justify-content: space-between; }
.switch { width: 64px; height: 37px; display: flex; align-items: center; justify-content: flex-end; padding-right: 2px; border-radius: 19px; background: #171717; }
.thumb { width: 32px; height: 32px; border-radius: 50%; background: #fff; }
.toggle-label { display: flex; align-items: center; gap: 10px; font-weight: 500; color: #171717; letter-spacing: -.25px; }
.actions { display: flex; flex-direction: column; gap: 18px; padding: 34px 32px 0; border-top: 2px solid #e5e5e5; }
.action-row { display: flex; align-items: flex-start; gap: 18px; height: 70px; }
.btn { height: 62px; display: flex; align-items: center; justify-content: center; gap: 22px; border-radius: 16px; font: 500 28px/40px Inter, "Liberation Sans", sans-serif; letter-spacing: -.2px; padding: 1px 0 0; }
.btn-grow { flex: 1; }
.btn-outline { background: #fff; color: #171717; border: 2px solid #e5e5e5; box-shadow: 0 1px 3px rgba(0,0,0,.06); }
.btn-solid { height: 70px; background: #171717; color: #fafafa; border: 0; }
.btn-tall { height: 72px; }
.btn-disabled { opacity: .5; }
.btn-reset { width: 71px; height: 70px; display: flex; align-items: center; justify-content: center; padding: 0; background: #fff; color: #8a8a8a; border: 2px solid #efefef; border-radius: 16px; }
```
